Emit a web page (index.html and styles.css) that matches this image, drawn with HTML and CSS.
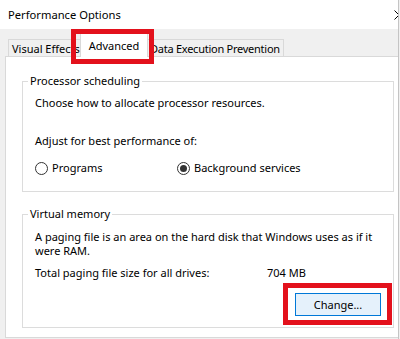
FILE: index.html
```html
<!DOCTYPE html>
<html>
<head>
<meta charset="utf-8">
<link rel="stylesheet" href="styles.css">
</head>
<body>
<div class="window">
  <div class="titlebar">
    <span class="title">Performance Options</span>
    <svg class="close" width="10" height="10" viewBox="0 0 10 10"><path d="M0.5 0.5L9.5 9.5M9.5 0.5L0.5 9.5" stroke="#000" stroke-width="1" fill="none"/></svg>
  </div>
  <div class="tabs">
    <div class="tab tab-first">Visual Effects</div>
    <div class="tab tab-active">Advanced</div>
    <div class="tab tab-last">Data Execution Prevention</div>
  </div>
  <div class="panel">
    <fieldset class="group group-cpu">
      <legend>Processor scheduling</legend>
      <p class="line">Choose how to allocate processor resources.</p>
      <p class="line adjust">Adjust for best performance of:</p>
      <div class="radios">
        <label class="opt opt-programs"><span class="radio"></span>Programs</label>
        <label class="opt"><span class="radio checked"></span>Background services</label>
      </div>
    </fieldset>
    <fieldset class="group group-vm">
      <legend>Virtual memory</legend>
      <p class="line">A paging file is an area on the hard disk that Windows uses as if it<br>were RAM.</p>
      <div class="total">
        <span>Total paging file size for all drives:</span>
        <span>704 MB</span>
      </div>
      <div class="btnrow">
        <button class="btn">Change...</button>
      </div>
    </fieldset>
  </div>
  <div class="mark mark-tab"></div>
  <div class="mark mark-btn"></div>
</div>
</body>
</html>
```
FILE: styles.css
```css
* { box-sizing: border-box; }
html, body { margin: 0; padding: 0; }
body {
  width: 400px;
  height: 339px;
  overflow: hidden;
  background: #f0f0f0;
  font-family: "Noto Sans", sans-serif;
  font-size: 11px;
  color: #000;
}
.window {
  position: relative;
  width: 399px;
  height: 339px;
  overflow: hidden;
  background: #f0f0f0;
  border-right: 1px solid #c4c4c4;
}
.titlebar {
  height: 29px;
  background: #fff;
  display: flex;
  align-items: center;
  padding-left: 8px;
}
.title {
  font-size: 11.2px;
  line-height: 16px;
}
.close {
  margin-left: auto;
  margin-right: -6px;
  flex: none;
}
.tabs {
  position: relative;
  z-index: 2;
  height: 28px;
  margin-bottom: -1px;
  display: flex;
  align-items: flex-end;
  padding-left: 8px;
}
.tab {
  height: 17px;
  margin-bottom: 1px;
  border: 1px solid #d9d9d9;
  border-bottom: none;
  background: #f0f0f0;
  line-height: 17px;
  white-space: nowrap;
  overflow: hidden;
  text-align: center;
}
.tab-first {
  width: 74px;
  text-align: left;
  padding-left: 3px;
}
.tab-active {
  position: relative;
  z-index: 3;
  width: 68px;
  height: 24px;
  margin-bottom: 0;
  margin-left: -2px;
  background: #fff;
  padding-top: 4px;
  line-height: 16px;
}
.tab-last {
  border-left: none;
  padding: 0 3px 0 2px;
  overflow: visible;
  letter-spacing: -0.25px;
}
.panel {
  margin-left: 5px;
  width: 420px;
  height: 282px;
  background: #fff;
  border: 1px solid #d9d9d9;
  padding: 16px 0 0 16px;
}
.group {
  width: 372px;
  margin: 0;
  min-width: 0;
  border: 1px solid #dcdcdc;
  padding: 7px 12px 16px 12px;
}
.group legend {
  line-height: 16px;
  padding: 0 2px;
  margin-left: -7px;
}
.line {
  margin: 0;
  line-height: 14px;
}
.adjust { margin-top: 24px; }
.radios {
  margin-top: 13px;
  display: flex;
  height: 14px;
  align-items: center;
}
.opt {
  display: flex;
  align-items: center;
  line-height: 14px;
}
.opt-programs { width: 142px; }
.radio {
  width: 13px;
  height: 13px;
  border: 1px solid #333;
  border-radius: 50%;
  margin-right: 4px;
  display: flex;
  align-items: center;
  justify-content: center;
  flex: none;
}
.radio.checked::after {
  content: "";
  width: 7px;
  height: 7px;
  border-radius: 50%;
  background: #333;
}
.group-vm {
  margin-top: 14px;
  padding: 8px 12px 11px 12px;
}
.total {
  margin-top: 8px;
  display: grid;
  grid-template-columns: 232px 1fr;
  line-height: 14px;
}
.btnrow {
  margin-top: 13px;
  display: flex;
  justify-content: flex-end;
}
.btn {
  width: 86px;
  height: 23px;
  background: #e5f1fb;
  border: 1px solid #0078d7;
  font-family: inherit;
  font-size: 11px;
  color: #000;
  padding: 0;
  margin: 0;
}
.mark {
  position: absolute;
  border: 5px solid #e3111c;
  z-index: 5;
}
.mark-tab {
  left: 71px;
  top: 29px;
  width: 83px;
  height: 35px;
}
.mark-btn {
  left: 283px;
  top: 283px;
  width: 109px;
  height: 42px;
}
```
